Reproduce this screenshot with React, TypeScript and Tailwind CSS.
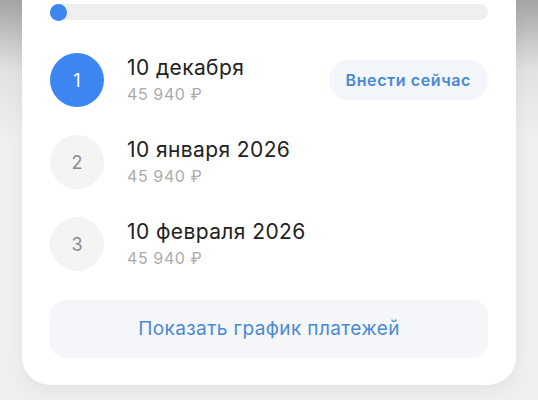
import React from "react";

type Payment = {
  n: number;
  date: string;
  amount: string;
  current?: boolean;
};

const payments: Payment[] = [
  { n: 1, date: "10 декабря", amount: "45 940 ₽", current: true },
  { n: 2, date: "10 января 2026", amount: "45 940 ₽" },
  { n: 3, date: "10 февраля 2026", amount: "45 940 ₽" },
];

function PaymentRow({ n, date, amount, current }: Payment) {
  return (
    <div className="h-[82px] flex items-center">
      <div
        className={`w-[54px] h-[54px] rounded-full flex items-center justify-center text-[18px] ${
          current ? "bg-[#3d85f0] text-white" : "bg-[#f4f4f5] text-[#8a8a8a]"
        }`}
      >
        {n}
      </div>
      <div className="ml-[23px] flex-1 flex flex-col">
        <span className="text-[21px] leading-6 tracking-[0.4px] text-[#222]">{date}</span>
        <span className="mt-[4px] text-[16px] leading-5 tracking-[0.6px] text-[#ababab]">{amount}</span>
      </div>
      {current && (
        <button className="h-[40px] px-[17px] rounded-full bg-[#f3f6fa] text-[16px] font-semibold tracking-[0.6px] text-[#4a88d8]">
          Внести сейчас
        </button>
      )}
    </div>
  );
}

export default function App() {
  return (
    <div
      className="w-[538px] h-[400px] overflow-hidden bg-[linear-gradient(to_bottom,#a4a4a4_0px,#e2e2e2_70px,#efefef_140px)]"
      style={{ fontFamily: "Inter, Roboto, 'Noto Sans', sans-serif" }}
    >
      <div className="mx-[22px] bg-white rounded-b-[28px] px-[28px] pt-[4px] pb-[27px] shadow-[0_6px_18px_rgba(0,0,0,0.05)]">
        {/* progress */}
        <div className="h-[16px] rounded-full bg-[#efefef] flex items-center">
          <div className="w-[17px] h-[17px] rounded-full bg-[#3d85f0]" />
        </div>

        <div className="mt-[19px] flex flex-col">
          {payments.map((p) => (
            <PaymentRow key={p.n} {...p} />
          ))}
        </div>

        <button className="mt-[15px] w-full h-[58px] rounded-[16px] bg-[#f4f6f9] text-[19px] tracking-[0.4px] text-[#4a88d8]">
          Показать график платежей
        </button>
      </div>
    </div>
  );
}
